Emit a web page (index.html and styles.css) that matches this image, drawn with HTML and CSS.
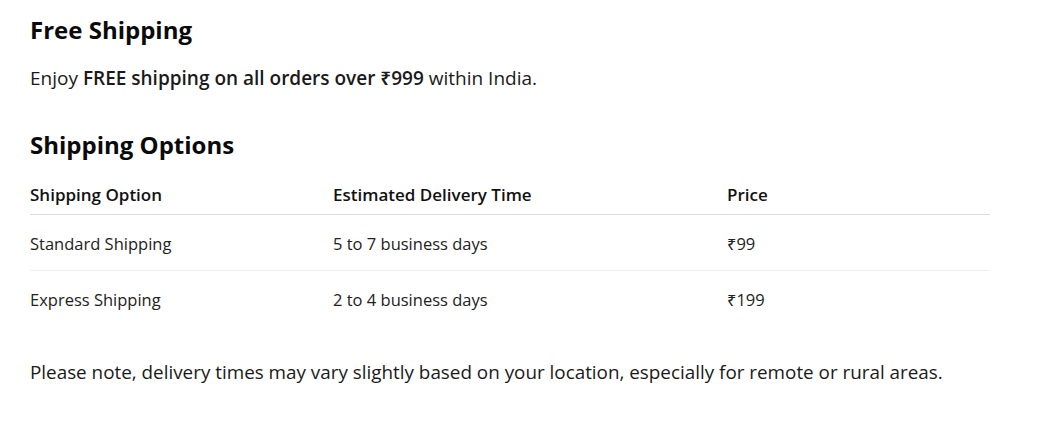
FILE: index.html
```html
<!DOCTYPE html>
<html lang="en">
<head>
    <meta charset="UTF-8">
    <meta name="viewport" content="width=device-width, initial-scale=1.0">
    <title> Shipping Policy </title>
    <link rel="stylesheet" href="styles.css">
</head>
<body>

    <div class="policyContainer">

        <h2 class="sectionTitle">Free Shipping</h2>
        <p class="sectionText">Enjoy <strong>FREE shipping on all orders over ₹999</strong> within India.</p>

        <h2 class="sectionTitle optionsTitle">Shipping Options</h2>

        <table class="shippingTable">
            <tr>
                <th class="col1">Shipping Option</th>
                <th class="col2">Estimated Delivery Time</th>
                <th class="col3">Price</th>
            </tr>
            <tr>
                <td class="col1">Standard Shipping</td>
                <td class="col2">5 to 7 business days</td>
                <td class="col3">₹99</td>
            </tr>
            <tr>
                <td class="col1">Express Shipping</td>
                <td class="col2">2 to 4 business days</td>
                <td class="col3">₹199</td>
            </tr>
        </table>

        <p class="sectionText noteText">Please note, delivery times may vary slightly based on your location, especially for remote or rural areas.</p>

    </div>

</body>
</html>
```

FILE: styles.css
```css
* {
    margin: 0;
    padding: 0;
    box-sizing: border-box;
}

body {
    background-color: #ffffff;
    color: #111111;
    font-family: "Open Sans", "Noto Sans", sans-serif;
}

.policyContainer {
    padding: 14px 30px;
}

.sectionTitle {
    font-size: 24px;
    font-weight: 700;
    line-height: 32px;
    color: #0a0a0a;
}

.sectionText {
    font-size: 19px;
    line-height: 28px;
    margin-top: 18px;
    color: #1a1a1a;
}

.sectionText strong {
    font-weight: 600;
}

.optionsTitle {
    margin-top: 37px;
}

.shippingTable {
    width: 960px;
    border-collapse: collapse;
    margin-top: 11px;
}

.shippingTable th {
    text-align: left;
    font-size: 17px;
    font-weight: 600;
    padding: 11px 0 8px 0;
    border-bottom: 1px solid #dddddd;
}

.shippingTable td {
    text-align: left;
    font-size: 16.5px;
    color: #222222;
    padding: 17px 0 15px 0;
    border-bottom: 1px solid #f0f0f0;
}

.shippingTable tr:last-child td {
    border-bottom: none;
}

.col1 {
    width: 303px;
}

.col2 {
    width: 394px;
}

.col3 {
    width: 263px;
}

.noteText {
    font-size: 18.85px;
    margin-top: 32px;
}
```
